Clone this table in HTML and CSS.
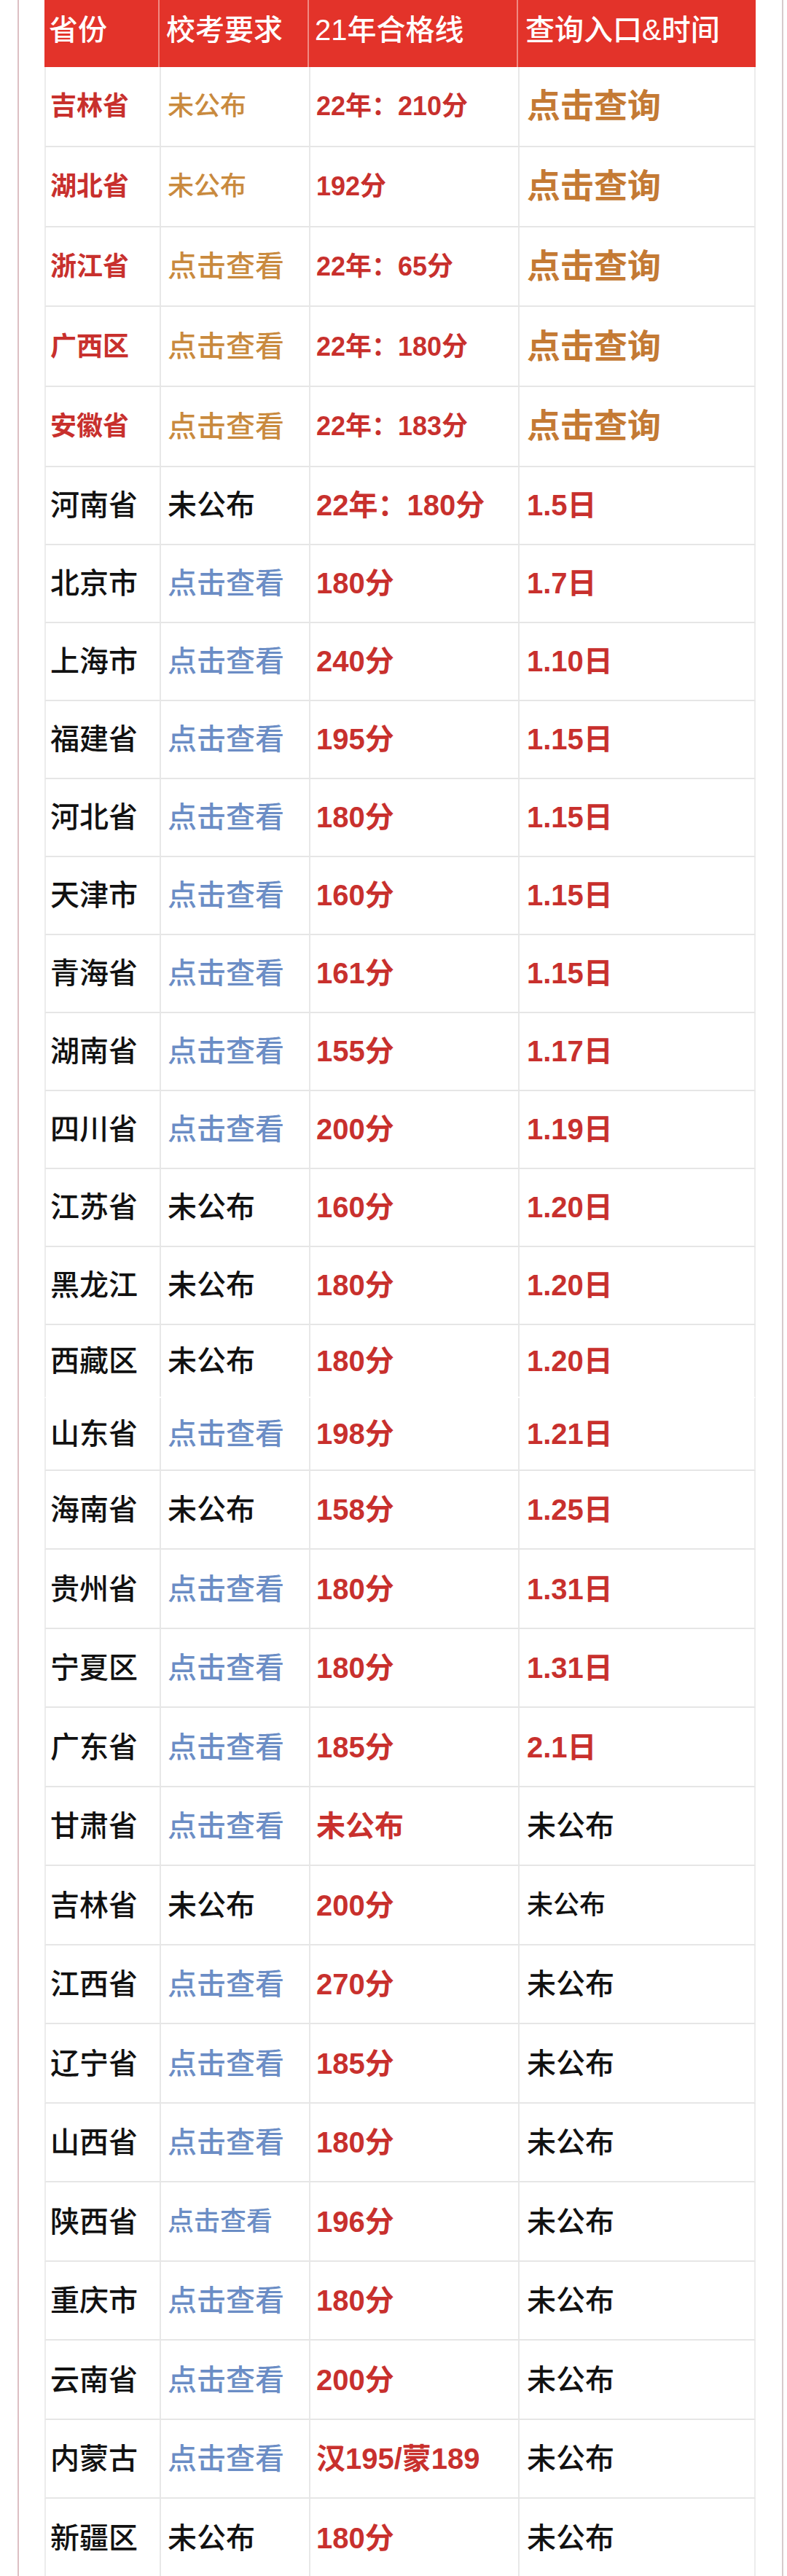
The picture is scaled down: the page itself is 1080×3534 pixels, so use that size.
FILE: index.html
```html
<!DOCTYPE html>
<html lang="zh-CN">
<head>
<meta charset="utf-8">
<title>校考合格线</title>
<link rel="stylesheet" href="styles.css">
</head>
<body>
<div class="frame">
  <div class="table">
    <div class="head">
      <div class="cell">省份</div>
      <div class="cell">校考要求</div>
      <div class="cell">21年合格线</div>
      <div class="cell">查询入口&amp;时间</div>
    </div>

    <div class="row top"><div class="cell red s36">吉林省</div><div class="cell orange s36">未公布</div><div class="cell red s36">22年：210分</div><div class="cell query">点击查询</div></div>
    <div class="row top"><div class="cell red s36">湖北省</div><div class="cell orange s36">未公布</div><div class="cell red s36">192分</div><div class="cell query">点击查询</div></div>
    <div class="row top"><div class="cell red s36">浙江省</div><div class="cell orange">点击查看</div><div class="cell red s36">22年：65分</div><div class="cell query">点击查询</div></div>
    <div class="row top"><div class="cell red s36">广西区</div><div class="cell orange">点击查看</div><div class="cell red s36">22年：180分</div><div class="cell query">点击查询</div></div>
    <div class="row top"><div class="cell red s36">安徽省</div><div class="cell orange">点击查看</div><div class="cell red s36">22年：183分</div><div class="cell query">点击查询</div></div>

    <div class="row mid"><div class="cell black">河南省</div><div class="cell black">未公布</div><div class="cell red">22年：180分</div><div class="cell red">1.5日</div></div>
    <div class="row mid"><div class="cell black">北京市</div><div class="cell blue">点击查看</div><div class="cell red">180分</div><div class="cell red">1.7日</div></div>
    <div class="row mid"><div class="cell black">上海市</div><div class="cell blue">点击查看</div><div class="cell red">240分</div><div class="cell red">1.10日</div></div>
    <div class="row mid"><div class="cell black">福建省</div><div class="cell blue">点击查看</div><div class="cell red">195分</div><div class="cell red">1.15日</div></div>
    <div class="row mid"><div class="cell black">河北省</div><div class="cell blue">点击查看</div><div class="cell red">180分</div><div class="cell red">1.15日</div></div>
    <div class="row mid"><div class="cell black">天津市</div><div class="cell blue">点击查看</div><div class="cell red">160分</div><div class="cell red">1.15日</div></div>
    <div class="row mid"><div class="cell black">青海省</div><div class="cell blue">点击查看</div><div class="cell red">161分</div><div class="cell red">1.15日</div></div>
    <div class="row mid"><div class="cell black">湖南省</div><div class="cell blue">点击查看</div><div class="cell red">155分</div><div class="cell red">1.17日</div></div>
    <div class="row mid"><div class="cell black">四川省</div><div class="cell blue">点击查看</div><div class="cell red">200分</div><div class="cell red">1.19日</div></div>
    <div class="row mid"><div class="cell black">江苏省</div><div class="cell black">未公布</div><div class="cell red">160分</div><div class="cell red">1.20日</div></div>
    <div class="row mid"><div class="cell black">黑龙江</div><div class="cell black">未公布</div><div class="cell red">180分</div><div class="cell red">1.20日</div></div>

    <div class="row short open"><div class="cell black">西藏区</div><div class="cell black">未公布</div><div class="cell red">180分</div><div class="cell red">1.20日</div></div>
    <div class="row short"><div class="cell black">山东省</div><div class="cell blue">点击查看</div><div class="cell red">198分</div><div class="cell red">1.21日</div></div>

    <div class="row"><div class="cell black">海南省</div><div class="cell black">未公布</div><div class="cell red">158分</div><div class="cell red">1.25日</div></div>
    <div class="row"><div class="cell black">贵州省</div><div class="cell blue">点击查看</div><div class="cell red">180分</div><div class="cell red">1.31日</div></div>
    <div class="row"><div class="cell black">宁夏区</div><div class="cell blue">点击查看</div><div class="cell red">180分</div><div class="cell red">1.31日</div></div>
    <div class="row"><div class="cell black">广东省</div><div class="cell blue">点击查看</div><div class="cell red">185分</div><div class="cell red">2.1日</div></div>
    <div class="row"><div class="cell black">甘肃省</div><div class="cell blue">点击查看</div><div class="cell red">未公布</div><div class="cell black">未公布</div></div>
    <div class="row"><div class="cell black">吉林省</div><div class="cell black">未公布</div><div class="cell red">200分</div><div class="cell black s36">未公布</div></div>
    <div class="row"><div class="cell black">江西省</div><div class="cell blue">点击查看</div><div class="cell red">270分</div><div class="cell black">未公布</div></div>
    <div class="row"><div class="cell black">辽宁省</div><div class="cell blue">点击查看</div><div class="cell red">185分</div><div class="cell black">未公布</div></div>
    <div class="row"><div class="cell black">山西省</div><div class="cell blue">点击查看</div><div class="cell red">180分</div><div class="cell black">未公布</div></div>
    <div class="row"><div class="cell black">陕西省</div><div class="cell blue s36">点击查看</div><div class="cell red">196分</div><div class="cell black">未公布</div></div>
    <div class="row"><div class="cell black">重庆市</div><div class="cell blue">点击查看</div><div class="cell red">180分</div><div class="cell black">未公布</div></div>
    <div class="row"><div class="cell black">云南省</div><div class="cell blue">点击查看</div><div class="cell red">200分</div><div class="cell black">未公布</div></div>
    <div class="row"><div class="cell black">内蒙古</div><div class="cell blue">点击查看</div><div class="cell red">汉195/蒙189</div><div class="cell black">未公布</div></div>
    <div class="row"><div class="cell black">新疆区</div><div class="cell black">未公布</div><div class="cell red">180分</div><div class="cell black">未公布</div></div>
  </div>
</div>
</body>
</html>
```

FILE: styles.css
```css
html, body {
  margin: 0;
  padding: 0;
  background: #ffffff;
}

body {
  font-family: "Liberation Sans", "Noto Sans CJK SC", sans-serif;
  height: 3534px;
  overflow: hidden;
}

.frame {
  margin-left: 24px;
  width: 1051px;
  box-sizing: border-box;
  border-left: 2px solid #dcbfc3;
  border-right: 2px solid #d6cacc;
  padding-left: 35px;
  min-height: 3534px;
}

.table {
  width: 976px;
}

.head,
.row {
  display: grid;
  grid-template-columns: 156px 205px 287px 328px;
  box-sizing: border-box;
}

.head {
  height: 92px;
  background: #e3332a;
  color: #ffffff;
  font-size: 39px;
  font-weight: 500;
}

.head .cell {
  align-items: flex-start;
  padding-top: 17px;
  border-left: 2px solid #f08a82;
}

.head .cell:first-child {
  border-left: none;
}

.row {
  height: 108.5px;
  border-bottom: 2px solid #e6e6e6;
  border-left: 2px solid #ececec;
  border-right: 2px solid #ececec;
  background: #ffffff;
}

.row.top {
  height: 109.8px;
}

.row.mid {
  height: 107px;
}

.row.short {
  height: 100px;
}

.row.open {
  border-bottom-color: transparent;
}

.cell {
  display: flex;
  align-items: center;
  box-sizing: border-box;
  padding-left: 8px;
  line-height: 1.2;
  font-size: 40px;
  white-space: nowrap;
}

.cell:nth-child(1) {
  padding-left: 6px;
}

.cell:nth-child(2) {
  padding-left: 9px;
}

.cell:nth-child(3) {
  padding-left: 8px;
}

.cell:nth-child(4) {
  padding-left: 10px;
}

.row .cell + .cell {
  border-left: 2px solid #e8e8e8;
}

.s36 {
  font-size: 36px;
}

.red {
  color: #c8302d;
  font-weight: 700;
}

.orange {
  color: #c98a3e;
  font-weight: 500;
}

.query {
  color: #c47a34;
  font-size: 46px;
  font-weight: 700;
}

.blue {
  color: #6b8dc5;
  font-weight: 500;
}

.black {
  color: #111111;
  font-weight: 500;
}
```
